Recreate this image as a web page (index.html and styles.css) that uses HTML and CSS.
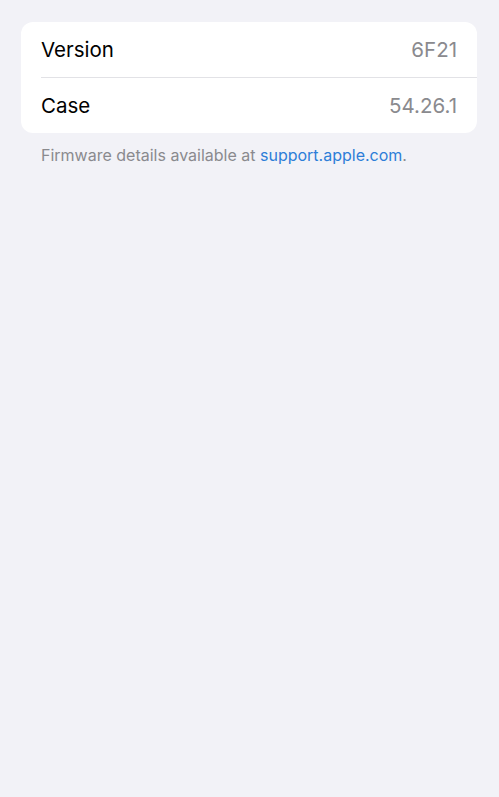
FILE: index.html
```html
<!DOCTYPE html>
<html>
<head>
    <title>Firmware</title>
    <link rel="stylesheet" href="styles.css">
</head>
<body>
    <div class="page">
        <div class="card">
            <div class="row">
                <span class="label">Version</span>
                <span class="value">6F21</span>
            </div>
            <div class="row">
                <span class="label">Case</span>
                <span class="value">54.26.1</span>
            </div>
        </div>
        <p class="note">Firmware details available at <a href="#">support.apple.com</a>.</p>
    </div>
</body>
</html>
```

FILE: styles.css
```css
body {
    margin: 0;
    background: #f2f2f7;
    font-family: Inter, "Noto Sans", sans-serif;
    height: 100vh;
}

.page {
    padding: 22px 22px 0 21px;
}

.card {
    background: #ffffff;
    border-radius: 12px;
    padding-left: 20px;
}

.row {
    display: flex;
    justify-content: space-between;
    align-items: center;
    height: 55px;
    padding-right: 20px;
    font-size: 20.5px;
}

.row + .row {
    border-top: 1px solid #e2e2e6;
}

.label {
    color: #000000;
}

.value {
    color: #8a8a8e;
}

.note {
    margin: 12px 0 0 20px;
    font-size: 16px;
    color: #8a8a8e;
}

.note a {
    color: #2d7ed8;
    text-decoration: none;
}
```
